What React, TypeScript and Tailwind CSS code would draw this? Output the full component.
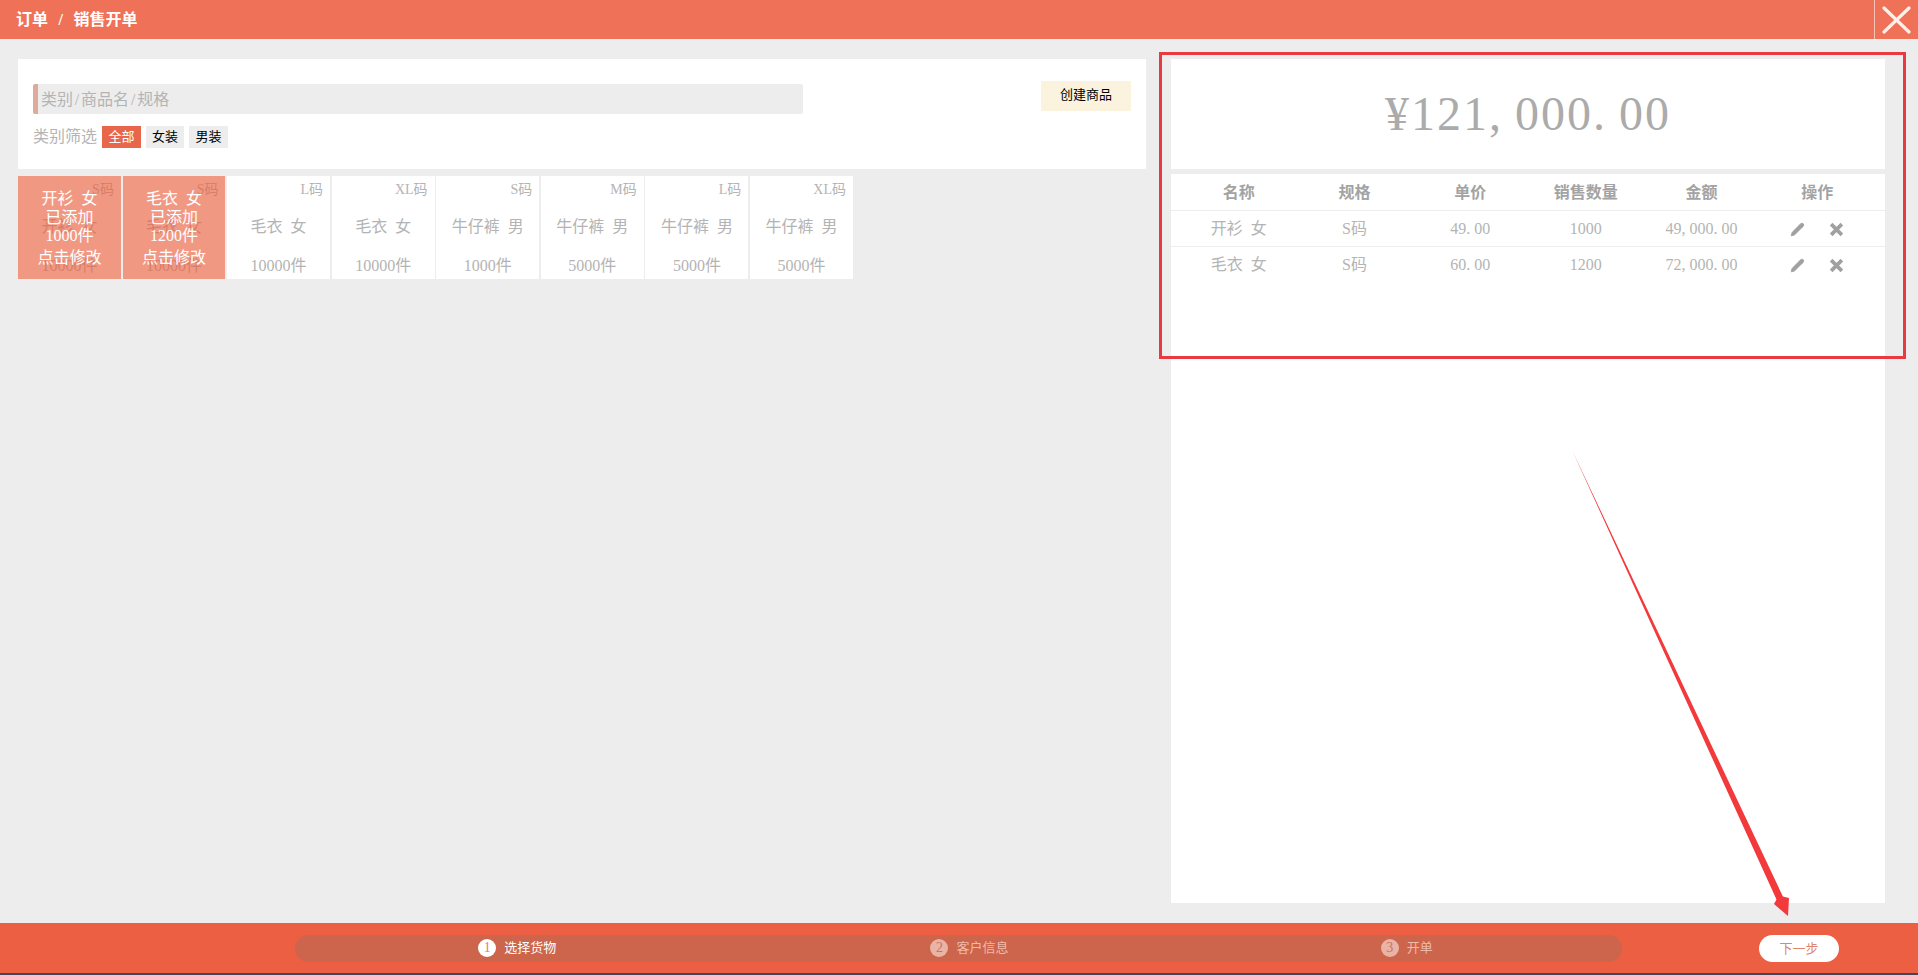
import React from 'react';
import { Pencil } from 'lucide-react';

const font = { fontFamily: '"Liberation Serif", "Noto Sans CJK SC", serif' };

const products = [
  { size: 'S码', name: '开衫 女', stock: '10000件', added: '1000件' },
  { size: 'S码', name: '毛衣 女', stock: '10000件', added: '1200件' },
  { size: 'L码', name: '毛衣 女', stock: '10000件' },
  { size: 'XL码', name: '毛衣 女', stock: '10000件' },
  { size: 'S码', name: '牛仔裤 男', stock: '1000件' },
  { size: 'M码', name: '牛仔裤 男', stock: '5000件' },
  { size: 'L码', name: '牛仔裤 男', stock: '5000件' },
  { size: 'XL码', name: '牛仔裤 男', stock: '5000件' },
];

const rows = [
  { name: '开衫 女', size: 'S码', price: '49.00', qty: '1000', total: '49,000.00' },
  { name: '毛衣 女', size: 'S码', price: '60.00', qty: '1200', total: '72,000.00' },
];

const steps = [
  { label: '选择货物', pad: 'pl-[2px]' },
  { label: '客户信息', pad: 'pl-[22px]' },
  { label: '开单', pad: 'pl-[12px]' },
];

// the original font is fixed width, so , and . take a full digit cell
const Amount = ({ value, cell }: { value: string; cell: string }) => (
  <>
    {value.split(/([.,])/).map((part, i) =>
      part === '.' || part === ',' ? (
        <span key={i} className={`inline-block text-left ${cell}`}>{part}</span>
      ) : (
        <span key={i}>{part}</span>
      )
    )}
  </>
);

const ProductTile = ({ size, name, stock, added }: { size: string; name: string; stock: string; added?: string }) => (
  <div className="relative w-[102.9px] h-[103px] bg-white text-[#b4b4b4] [word-spacing:4px]">
    <div className="h-[27px] pt-[5px] pr-[7px] text-right text-[14px] leading-[18px]">{size}</div>
    <div className="mt-[13px] text-center text-[16px] leading-[22px]">{name}</div>
    <div className="mt-[17px] text-center text-[16px] leading-[22px]">{stock}</div>
    {added && (
      <div className="absolute inset-0 bg-[#ea6140]/65 pt-[14px] text-center text-[16px] leading-[18.5px] text-white">
        <div>{name}</div>
        <div>已添加</div>
        <div>{added}</div>
        <div className="mt-[3px]">点击修改</div>
      </div>
    )}
  </div>
);

const App: React.FC = () => {
  return (
    <div className="relative w-[1918px] h-[975px] overflow-hidden bg-[#ededed] flex flex-col" style={font}>
      <header className="h-[39px] shrink-0 bg-[#ef7157] flex items-center justify-between pl-[16px]">
        <div className="text-[16px] font-bold text-white [word-spacing:6.5px]">订单 / 销售开单</div>
        <div className="w-[44px] h-full border-l border-[#f7c3b6] flex items-center justify-center">
          <svg width="30" height="30" viewBox="0 0 30 30" fill="none" stroke="#fdf0ea" strokeWidth="3.2" strokeLinecap="round">
            <path d="M2 3 L27 27 M27 3 L2 27" />
          </svg>
        </div>
      </header>

      <main className="flex-1 flex pt-[20px] pb-[20px] pl-[18px]">
        <section className="w-[1128px]">
          <div className="h-[110px] bg-white pl-[15px] pr-[15px] pt-[25px] flex justify-between">
            <div>
              <div className="w-[770px] h-[30px] bg-[#ededed] border-l-[5px] border-[#dfa99b] rounded-[2px] pl-[3px] text-[16px] leading-[32px] text-[#b4b4b4]">
                类别<span className="mx-[1.8px]">/</span>商品名<span className="mx-[1.8px]">/</span>规格
              </div>
              <div className="mt-[11px] flex items-center text-[16px] text-[#b4b4b4]">
                <span className="w-[69px]">类别筛选</span>
                <span className="w-[39px] h-[22px] bg-[#e8664a] text-white text-[13px] leading-[22px] text-center">全部</span>
                <span className="ml-[5px] w-[38px] h-[22px] bg-[#ededed] text-black text-[13px] leading-[22px] text-center">女装</span>
                <span className="ml-[5px] w-[39px] h-[22px] bg-[#ededed] text-black text-[13px] leading-[22px] text-center">男装</span>
              </div>
            </div>
            <div className="w-[90px] h-[30px] -mt-[3px] bg-[#fbf3dd] text-[13px] leading-[28px] text-center text-black">创建商品</div>
          </div>
          <div className="mt-[7px] flex gap-[1.7px]">
            {products.map((p, i) => (
              <ProductTile key={i} {...p} />
            ))}
          </div>
        </section>

        <aside className="ml-[25px] w-[714px] bg-white flex flex-col">
          <div className="h-[110px] flex items-center justify-center text-[48px] text-[#ababab] tracking-[2px]">
            <div><Amount value="¥121,000.00" cell="w-[26px]" /></div>
          </div>
          <div className="h-[5px] bg-[#ededed]" />
          <div className="px-[10px]">
            <div className="grid grid-cols-6 h-[36px] pt-[1px] items-center text-center text-[16px] font-bold text-[#a3a3a3]">
              <span>名称</span>
              <span>规格</span>
              <span>单价</span>
              <span>销售数量</span>
              <span>金额</span>
              <span>操作</span>
            </div>
          </div>
          {rows.map((r) => (
            <div key={r.name} className="border-t border-[#ededed] px-[10px]">
              <div className="grid grid-cols-6 h-[35px] pt-[1px] items-center text-center text-[16px] text-[#b4b4b4] [word-spacing:4px]">
                <span>{r.name}</span>
                <span>{r.size}</span>
                <span><Amount value={r.price} cell="w-[8px]" /></span>
                <span>{r.qty}</span>
                <span><Amount value={r.total} cell="w-[8px]" /></span>
                <span className="flex items-center justify-center gap-[24px] text-[#a0a0a0]">
                  <Pencil size={15} fill="currentColor" strokeWidth={1.5} />
                  <svg width="15" height="15" viewBox="0 0 14 14" stroke="currentColor" strokeWidth="3.4" fill="none">
                    <path d="M2 2 L12 12 M12 2 L2 12" />
                  </svg>
                </span>
              </div>
            </div>
          ))}
        </aside>
      </main>

      <footer className="h-[50px] shrink-0 bg-[#ec5f42] flex items-center pl-[295px]">
        <div className="w-[1327px] h-[27px] rounded-full bg-[#cd654c] grid grid-cols-3 items-center">
          {steps.map((s, i) => (
            <div key={s.label} className={`flex items-center justify-center gap-[8px] text-[13px] ${i === 0 ? 'text-white' : 'text-[#f0b9aa]'} ${s.pad}`}>
              <span className={`w-[18px] h-[18px] rounded-full text-center text-[14px] leading-[18px] ${i === 0 ? 'bg-white text-[#e8806a]' : 'bg-[#e9b3a5] text-[#c9735f]'}`}>{i + 1}</span>
              <span>{s.label}</span>
            </div>
          ))}
        </div>
        <div className="ml-[137px] w-[80px] h-[27px] rounded-full bg-white text-center text-[13px] leading-[27px] text-[#dc8672]">下一步</div>
      </footer>
      <div className="h-[2px] shrink-0 bg-[#44445a]" />

      {/* annotations drawn over the screenshot */}
      <div className="absolute left-[1159px] top-[52px] w-[747px] h-[307px] border-[3px] border-[#e83a40] pointer-events-none" />
      <svg className="absolute inset-0 pointer-events-none" width="1918" height="975" viewBox="0 0 1918 975">
        <polygon points="1572,450 1782.9,896.5 1789,898 1788,916 1774,904 1776.5,899.5" fill="#f23a3c" />
      </svg>
    </div>
  );
};

export default App;
